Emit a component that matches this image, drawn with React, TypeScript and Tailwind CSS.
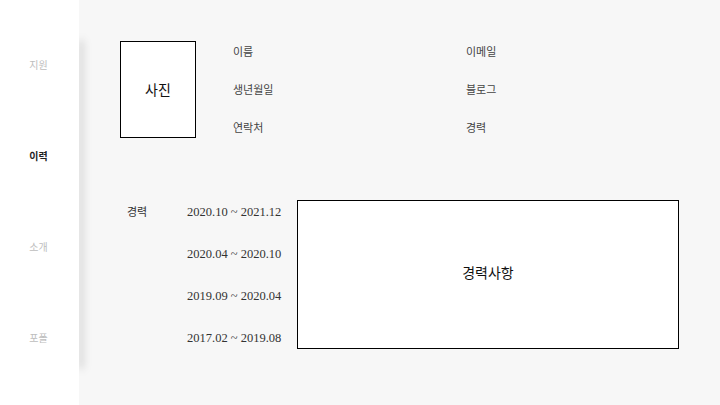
const serif = { fontFamily: '"Liberation Serif", "Noto Sans CJK KR", serif' }
const sans = { fontFamily: '"Noto Sans CJK KR", "Noto Sans", sans-serif' }

const nav = [
    { label: "지원", active: false },
    { label: "이력", active: true },
    { label: "소개", active: false },
    { label: "포폴", active: false },
]

const info = [
    ["이름", "이메일"],
    ["생년월일", "블로그"],
    ["연락처", "경력"],
]

const periods = ["2020.10 ~ 2021.12", "2020.04 ~ 2020.10", "2019.09 ~ 2020.04", "2017.02 ~ 2019.08"]

export default function App() {
    return (
        <div className="flex w-[720px] h-[405px] bg-[#f7f7f7] overflow-hidden" style={sans}>
            <aside className="relative z-10 w-[79px] shrink-0 bg-white">
                <div className="absolute right-0 top-[40px] bottom-[36px] w-[2px] rounded-full shadow-[3px_0_9px_rgba(0,0,0,0.38)]" />
                <div className="absolute inset-0 bg-white" />
                <nav className="relative flex flex-col items-center pt-[57px] gap-[75px] pr-[2px]">
                    {nav.map(n => (
                        <div
                            key={n.label}
                            className={n.active ? "h-[16px] text-[10px] font-semibold text-[#222]" : "h-[16px] text-[10px] text-[#bdbdbd]"}
                        >
                            {n.label}
                        </div>
                    ))}
                </nav>
            </aside>

            <main className="flex-1 pl-[41px] pt-[41px]">
                <section className="flex">
                    <div className="flex items-center justify-center w-[76px] h-[97px] border border-black bg-white text-[14px] text-[#111]">
                        사진
                    </div>
                    <div className="grid grid-cols-[233px_auto] auto-rows-[16px] ml-[37px] gap-y-[22px] mt-[3px] h-fit text-[11px] text-[#444]" style={serif}>
                        {info.flat().map(l => (
                            <div key={l} className="h-[16px] leading-[16px]">{l}</div>
                        ))}
                    </div>
                </section>

                <section className="flex mt-[63px]">
                    <div className="w-[67px] pl-[7px] pt-[3px] text-[11px] text-[#333]" style={serif}>경력</div>
                    <div className="flex flex-col gap-[26px] pt-[3px] w-[110px] text-[12.5px] text-[#333]" style={serif}>
                        {periods.map(p => (
                            <div key={p} className="h-[16px] leading-[16px]">{p}</div>
                        ))}
                    </div>
                    <div className="flex items-center justify-center w-[382px] h-[149px] -mt-[1px] pb-[4px] border border-black bg-white text-[14px] text-[#111]">
                        경력사항
                    </div>
                </section>
            </main>
        </div>
    )
}
